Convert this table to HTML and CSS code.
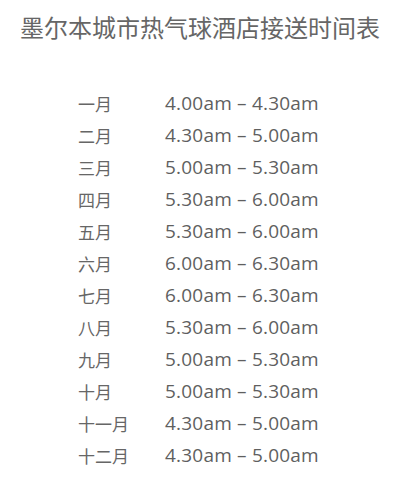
FILE: index.html
```html
<!DOCTYPE html>
<html lang="zh">
<head>
<meta charset="utf-8">
<link rel="stylesheet" href="styles.css">
</head>
<body>
<h1 class="title">墨尔本城市热气球酒店接送时间表</h1>
<div class="schedule">
  <div class="month">一月</div><div class="time">4.00am – 4.30am</div>
  <div class="month">二月</div><div class="time">4.30am – 5.00am</div>
  <div class="month">三月</div><div class="time">5.00am – 5.30am</div>
  <div class="month">四月</div><div class="time">5.30am – 6.00am</div>
  <div class="month">五月</div><div class="time">5.30am – 6.00am</div>
  <div class="month">六月</div><div class="time">6.00am – 6.30am</div>
  <div class="month">七月</div><div class="time">6.00am – 6.30am</div>
  <div class="month">八月</div><div class="time">5.30am – 6.00am</div>
  <div class="month">九月</div><div class="time">5.00am – 5.30am</div>
  <div class="month">十月</div><div class="time">5.00am – 5.30am</div>
  <div class="month">十一月</div><div class="time">4.30am – 5.00am</div>
  <div class="month">十二月</div><div class="time">4.30am – 5.00am</div>
</div>
</body>
</html>
```
FILE: styles.css
```css
html, body {
  margin: 0;
  padding: 0;
  background: #fff;
}
body {
  font-family: "Open Sans", "Noto Sans CJK SC", sans-serif;
  color: #666;
}
.title {
  margin: 0;
  padding: 11px 0 0 20px;
  font-family: "Noto Sans CJK SC", sans-serif;
  font-weight: 400;
  font-size: 24px;
  line-height: 32px;
  color: #666;
}
.schedule {
  display: grid;
  grid-template-columns: 87px auto;
  grid-auto-rows: 32px;
  align-items: center;
  padding: 44px 0 0 78px;
  font-size: 18px;
}
.month {
  font-family: "Noto Sans CJK SC", sans-serif;
  font-size: 17px;
}
.time {
  font-size: 19px;
  letter-spacing: 0.2px;
  color: #5f5f5f;
}
```
